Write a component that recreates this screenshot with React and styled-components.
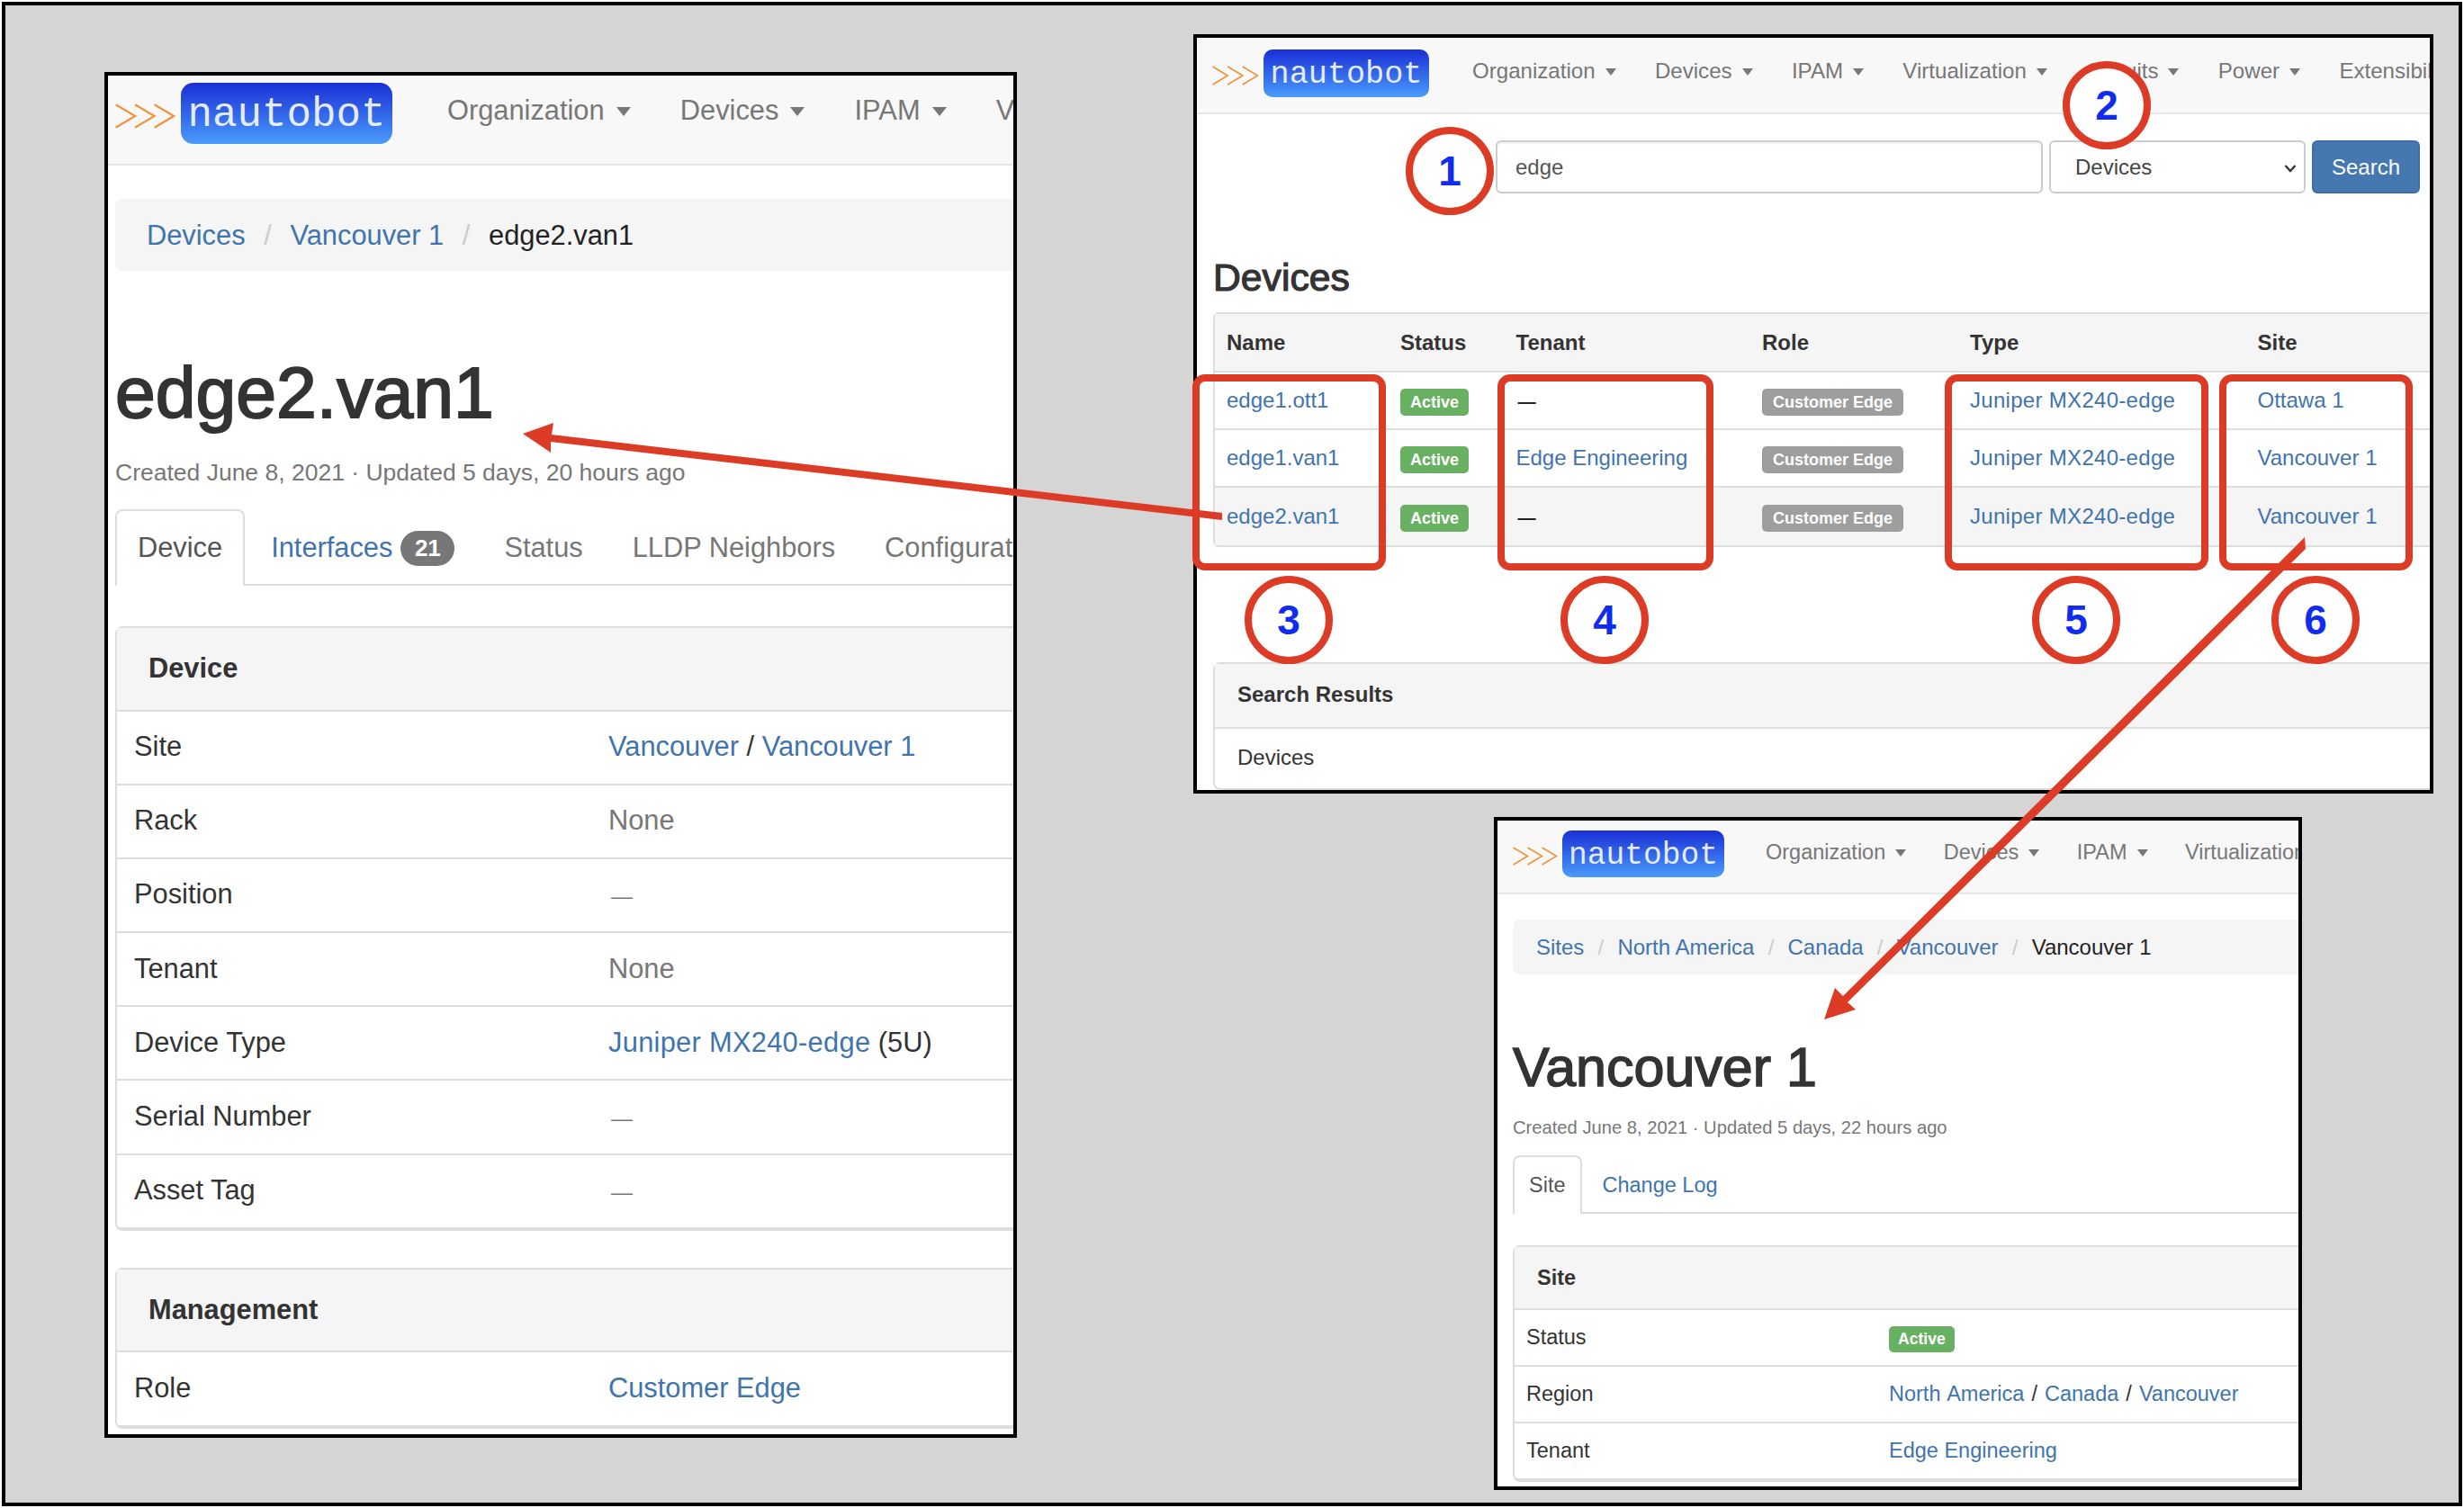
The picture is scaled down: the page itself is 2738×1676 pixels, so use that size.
import React from 'react';
import styled, { createGlobalStyle, ThemeProvider } from 'styled-components';

const t = (k) => (p) => `${p.theme[k]}px`;
const RED = '#dc3b26';
const LINK = '#3f74ae';

const Global = createGlobalStyle`
  html, body { margin: 0; padding: 0; background: #fff; }
  * { box-sizing: border-box; }
  body { font-family: "Liberation Sans", Arial, sans-serif; color: #333; }
`;

const Page = styled.div`
  position: relative;
  width: 2738px;
  height: 1676px;
  padding: 2px;
  overflow: hidden;
  background: #fff;
`;
const Frame = styled.div`
  width: 2734px;
  height: 1672px;
  border: 4px solid #000;
  background: #d5d5d5;
`;
const Win = styled.section`
  position: absolute;
  left: ${(p) => p.$x}px;
  top: ${(p) => p.$y}px;
  width: ${(p) => p.$w}px;
  height: ${(p) => p.$h}px;
  border: 4px solid #000;
  background: #fff;
  overflow: hidden;
  font-size: ${t('base')};
  line-height: 1.2;
`;
const Navbar = styled.nav`
  display: flex;
  align-items: flex-start;
  height: ${(p) => p.theme.navH + 2}px;
  background: #f8f8f8;
  border-bottom: 2px solid #e7e7e7;
  white-space: nowrap;
`;
const ChevSvg = styled.svg`
  flex: none;
  width: ${t('chevW')};
  height: ${t('chevH')};
  margin-left: ${t('chevL')};
  margin-top: ${t('chevT')};
`;
const Logo = styled.div`
  flex: none;
  display: flex;
  align-items: center;
  justify-content: center;
  width: ${t('logoW')};
  height: ${t('logoH')};
  margin-left: ${t('logoL')};
  margin-top: ${t('logoT')};
  padding-top: ${t('logoP')};
  border-radius: ${t('logoR')};
  background: linear-gradient(180deg, #1a2fd6 0%, #4a9cfb 100%);
  color: rgba(255, 255, 255, 0.88);
  font-family: "Liberation Mono", monospace;
  font-size: ${t('logoFont')};
`;
const NavList = styled.div`
  display: flex;
  align-items: center;
  height: ${t('navBox')};
  margin-left: ${t('navL')};
  gap: ${t('navGap')};
`;
const NavItem = styled.span`
  flex: none;
  display: inline-flex;
  align-items: center;
  gap: ${t('caretGap')};
  color: #777;
  font-size: ${t('navFont')};
`;
const Caret = styled.i`
  display: block;
  margin-top: 2px;
  border-top: ${t('caretH')} solid #777;
  border-left: ${(p) => p.theme.caretW / 2}px solid transparent;
  border-right: ${(p) => p.theme.caretW / 2}px solid transparent;
`;
const Crumbs = styled.div`
  display: flex;
  align-items: center;
  height: ${t('crumbH')};
  margin: ${t('crumbT')} 0 0 ${t('pageL')};
  padding: 2px 0 0 ${t('crumbP')};
  border-radius: 8px 0 0 8px;
  background: #f5f5f5;
  font-size: ${t('crumbF')};
  white-space: nowrap;
  color: #222;
`;
const Link = styled.a`
  color: ${LINK};
`;
const ModelLink = styled(Link)`
  letter-spacing: 0.3px;
`;
const Sep = styled.span`
  padding: 0 ${t('sepP')};
  color: #ccc;
`;
const Title = styled.h1`
  margin: ${t('titleT')} 0 0 ${t('pageL')};
  font-size: ${t('titleF')};
  line-height: 1;
  font-weight: 400;
  color: #333;
  -webkit-text-stroke: ${(p) => p.theme.titleS}px #333;
  white-space: nowrap;
`;
const Meta = styled.div`
  margin: ${t('metaT')} 0 0 ${t('pageL')};
  height: ${t('metaH')};
  line-height: ${t('metaH')};
  font-size: ${t('metaF')};
  color: #777;
  white-space: nowrap;
`;
const Tabs = styled.div`
  display: flex;
  gap: ${t('tabGap')};
  height: ${t('tabH')};
  margin: ${t('tabT')} 0 0 ${t('pageL')};
  border-bottom: 2px solid #ddd;
  white-space: nowrap;
`;
const Tab = styled.div`
  flex: none;
  display: flex;
  align-items: center;
  height: ${t('tabH')};
  padding: 0 ${(p) => (p.$active ? p.theme.tabActiveP : p.theme.tabP)}px;
  border: 2px solid ${(p) => (p.$active ? '#ddd' : 'transparent')};
  border-bottom: 0;
  border-radius: 8px 8px 0 0;
  background: ${(p) => (p.$active ? '#fff' : 'transparent')};
  color: ${(p) => (p.$active ? '#555' : p.$link ? LINK : '#777')};
`;
const Count = styled.span`
  margin-left: 9px;
  width: 60px;
  height: 39px;
  border-radius: 20px;
  background: #777;
  color: #fff;
  font-size: 26px;
  font-weight: 700;
  line-height: 39px;
  text-align: center;
`;
const Panel = styled.div`
  margin: ${(p) => p.$top}px 0 0 ${t('pageL')};
  border: 2px solid #ddd;
  border-right: 0;
  border-radius: 8px 0 0 8px;
`;
const PanelHead = styled.div`
  display: flex;
  align-items: center;
  height: ${t('headH')};
  padding-left: ${t('headP')};
  background: #f5f5f5;
  border-bottom: 2px solid #ddd;
  font-weight: 700;
  color: #333;
`;
const AttrRow = styled.div`
  display: grid;
  grid-template-columns: ${t('labelW')} 1fr;
  align-items: center;
  height: ${t('rowH')};
  padding-left: ${t('labelP')};
  border-bottom: 2px solid #ddd;
  white-space: nowrap;
`;
const Muted = styled.span`
  color: #777;
`;
const RegionPath = styled.span`
  word-spacing: 1.5px;
`;
const Dash = styled.span`
  display: inline-block;
  margin-left: ${t('dashL')};
  font-size: ${t('dashF')};
  font-weight: ${(p) => p.theme.dashW};
  color: ${(p) => p.theme.dashC};
`;
const Label = styled.span`
  display: inline-block;
  height: ${t('badgeH')};
  line-height: ${t('badgeH')};
  padding: 0 ${(p) => p.theme.badgeP + (p.$grey ? 1 : 0)}px;
  margin-top: 3px;
  border-radius: 5px;
  background: ${(p) => (p.$grey ? '#9e9e9e' : '#69b162')};
  color: #fff;
  font-size: ${t('badgeF')};
  font-weight: 700;
  white-space: nowrap;
`;

/* search page */
const SearchForm = styled.div`
  display: flex;
  height: 59px;
  margin: 29px 0 0 332px;
`;
const SearchInput = styled.div`
  display: flex;
  align-items: center;
  width: 608px;
  padding: 2px 0 0 20px;
  border: 2px solid #ccc;
  border-radius: 6px;
  box-shadow: inset 0 2px 2px rgba(0, 0, 0, 0.06);
  color: #555;
`;
const SearchSelect = styled(SearchInput)`
  justify-content: space-between;
  width: 285px;
  margin-left: 7px;
  padding: 2px 8px 0 27px;
  box-shadow: none;
  color: #444;
`;
const SearchButton = styled.button`
  width: 120px;
  margin-left: 7px;
  padding: 2px 0 0;
  border: 2px solid #3d6ea5;
  border-radius: 6px;
  background: #4577b0;
  color: #fff;
  font: inherit;
`;
const SectionTitle = styled.h2`
  margin: 72px 0 0 ${t('pageL')};
  font-size: 42.7px;
  line-height: 1;
  font-weight: 400;
  -webkit-text-stroke: 1.2px #333;
`;
const TablePanel = styled.div`
  margin: 17px 0 0 ${t('pageL')};
  border: 2px solid #ddd;
  border-right: 0;
  border-radius: 6px 0 0 6px;
`;
const tableCols = '193px 128.5px 273.5px 231px 319.5px 300px';
const TableHead = styled.div`
  display: grid;
  grid-template-columns: ${tableCols};
  align-items: center;
  height: 65px;
  padding: 2px 0 0 13px;
  background: #f5f5f5;
  border-bottom: 2px solid #ddd;
  font-weight: 700;
`;
const TableRow = styled.div`
  display: grid;
  grid-template-columns: ${tableCols};
  align-items: center;
  height: 64px;
  padding: 1px 0 0 13px;
  background: ${(p) => (p.$hover ? '#f5f5f5' : '#fff')};
  border-bottom: ${(p) => (p.$last ? 0 : 2)}px solid #ddd;
  white-space: nowrap;
`;
const ResultsBody = styled.div`
  display: flex;
  align-items: center;
  height: 66px;
  padding-left: 25px;
`;

/* annotations */
const Callout = styled.div`
  position: absolute;
  top: 416px;
  left: ${(p) => p.$x}px;
  width: ${(p) => p.$w}px;
  height: 218px;
  border: 8px solid ${RED};
  border-radius: 14px;
`;
const Num = styled.div`
  position: absolute;
  left: ${(p) => p.$x - 49}px;
  top: ${(p) => p.$y - 49}px;
  display: flex;
  align-items: center;
  justify-content: center;
  width: 98px;
  height: 98px;
  border: 8px solid ${RED};
  border-radius: 50%;
  background: #fff;
  color: #102cf0;
  font-size: 46px;
  font-weight: 700;
`;
const Arrows = styled.svg`
  position: absolute;
  left: 0;
  top: 0;
  width: 2738px;
  height: 1676px;
  pointer-events: none;
`;

const common = { dashC: '#777', dashL: 3, dashW: 400 };
const w1 = {
  ...common, base: 30.8, navH: 98, chevL: 8, chevT: 31, chevW: 67, chevH: 28, logoL: 6, logoT: 8, logoP: 4, logoW: 235, logoH: 68, logoR: 14, logoFont: 45.8,
  navBox: 78, navL: 61, navGap: 55.2, navFont: 30.8, caretGap: 13, caretW: 17, caretH: 10,
  pageL: 8, crumbT: 37, crumbH: 80, crumbP: 35, crumbF: 30.8, sepP: 20.7, titleT: 95, titleF: 80.5, titleS: 2,
  metaT: 28, metaH: 40, metaF: 26.5, tabT: 21.5, tabH: 85, tabGap: 3, tabP: 24, tabActiveP: 23,
  headH: 92.5, headP: 35, rowH: 82.2, labelW: 527, labelP: 19, dashF: 24, badgeH: 0, badgeP: 0, badgeF: 0,
};
const w2 = {
  ...common, base: 24, navH: 83, chevL: 17, chevT: 31, chevW: 52, chevH: 22, logoL: 5, logoT: 13, logoP: 3, logoW: 184, logoH: 53, logoR: 10, logoFont: 35.2,
  navBox: 74, navL: 48, navGap: 43.3, navFont: 24.1, caretGap: 11, caretW: 13, caretH: 8,
  pageL: 18, dashF: 20, dashC: '#222', dashL: 2, dashW: 700, badgeH: 30, badgeP: 11, badgeF: 18, headH: 72, headP: 25,
};
const w3 = {
  ...common, base: 23.5, navH: 80, chevL: 17, chevT: 29, chevW: 50, chevH: 21, logoL: 5, logoT: 11, logoP: 3, logoW: 180, logoH: 52, logoR: 10, logoFont: 34.6,
  navBox: 70, navL: 46, navGap: 41.5, navFont: 23.5, caretGap: 11, caretW: 13, caretH: 8,
  pageL: 17, crumbT: 28, crumbH: 61, crumbP: 26, crumbF: 24, sepP: 15.2, titleT: 73, titleF: 61, titleS: 1.5,
  metaT: 21, metaH: 30, metaF: 20.2, tabT: 16, tabH: 65, tabGap: 5, tabP: 16, tabActiveP: 16,
  headH: 70, headP: 25, rowH: 63, labelW: 403, labelP: 13, dashF: 20, badgeH: 29, badgeP: 10, badgeF: 17.6,
};

const Chevrons = () => (
  <ChevSvg viewBox="0 0 53 22" preserveAspectRatio="none" aria-hidden="true">
    {[0.5, 17.5, 34.5].map((x) => (
      <polyline key={x} points={`${x},1 ${x + 17},11 ${x},21`} fill="none" stroke="#f39237" strokeWidth="1.7" />
    ))}
  </ChevSvg>
);

const TopBar = ({ items }) => (
  <Navbar>
    <Chevrons />
    <Logo>nautobot</Logo>
    <NavList>
      {items.map((i) => (
        <NavItem key={i}>
          {i}
          <Caret />
        </NavItem>
      ))}
    </NavList>
  </Navbar>
);

const Crumb = ({ links, current }) => (
  <Crumbs>
    {links.map((l) => (
      <React.Fragment key={l}>
        <Link>{l}</Link>
        <Sep>/</Sep>
      </React.Fragment>
    ))}
    {current}
  </Crumbs>
);

const Rows = ({ rows }) =>
  rows.map(([k, v]) => (
    <AttrRow key={k}>
      <span>{k}</span>
      <span>{v}</span>
    </AttrRow>
  ));

const deviceRows = [
  ['Site', <><Link>Vancouver</Link> / <Link>Vancouver 1</Link></>],
  ['Rack', <Muted>None</Muted>],
  ['Position', <Dash>—</Dash>],
  ['Tenant', <Muted>None</Muted>],
  ['Device Type', <><ModelLink>Juniper MX240-edge</ModelLink> (5U)</>],
  ['Serial Number', <Dash>—</Dash>],
  ['Asset Tag', <Dash>—</Dash>],
];

const DevicePage = () => (
  <ThemeProvider theme={w1}>
    <Win $x={116} $y={80} $w={1014} $h={1518}>
      <TopBar items={['Organization', 'Devices', 'IPAM', 'Virtualization']} />
      <Crumb links={['Devices', 'Vancouver 1']} current="edge2.van1" />
      <Title>edge2.van1</Title>
      <Meta>Created June 8, 2021 · Updated 5 days, 20 hours ago</Meta>
      <Tabs>
        <Tab $active>Device</Tab>
        <Tab $link>Interfaces<Count>21</Count></Tab>
        <Tab>Status</Tab>
        <Tab>LLDP Neighbors</Tab>
        <Tab>Configuration</Tab>
      </Tabs>
      <Panel $top={45}>
        <PanelHead>Device</PanelHead>
        <Rows rows={deviceRows} />
      </Panel>
      <Panel $top={41}>
        <PanelHead>Management</PanelHead>
        <Rows rows={[['Role', <Link>Customer Edge</Link>]]} />
      </Panel>
    </Win>
  </ThemeProvider>
);

const results = [
  ['edge1.ott1', null, 'Ottawa 1'],
  ['edge1.van1', 'Edge Engineering', 'Vancouver 1'],
  ['edge2.van1', null, 'Vancouver 1'],
];

const SearchPage = () => (
  <ThemeProvider theme={w2}>
    <Win $x={1326} $y={38} $w={1378} $h={844}>
      <TopBar items={['Organization', 'Devices', 'IPAM', 'Virtualization', 'Circuits', 'Power', 'Extensibility']} />
      <SearchForm>
        <SearchInput>edge</SearchInput>
        <SearchSelect>
          Devices
          <svg width="14" height="10" viewBox="0 0 14 10" aria-hidden="true">
            <polyline points="1.5,2 7,8 12.5,2" fill="none" stroke="#333" strokeWidth="2.4" />
          </svg>
        </SearchSelect>
        <SearchButton type="button">Search</SearchButton>
      </SearchForm>
      <SectionTitle>Devices</SectionTitle>
      <TablePanel>
        <TableHead>
          <span>Name</span>
          <span>Status</span>
          <span>Tenant</span>
          <span>Role</span>
          <span>Type</span>
          <span>Site</span>
        </TableHead>
        {results.map(([name, tenant, site], i) => (
          <TableRow key={name} $hover={i === 2} $last={i === 2}>
            <Link>{name}</Link>
            <span><Label>Active</Label></span>
            {tenant ? <Link>{tenant}</Link> : <span><Dash>—</Dash></span>}
            <span><Label $grey>Customer Edge</Label></span>
            <ModelLink>Juniper MX240-edge</ModelLink>
            <Link>{site}</Link>
          </TableRow>
        ))}
      </TablePanel>
      <Panel $top={128}>
        <PanelHead>Search Results</PanelHead>
        <ResultsBody>Devices</ResultsBody>
      </Panel>
    </Win>
  </ThemeProvider>
);

const SitePage = () => (
  <ThemeProvider theme={w3}>
    <Win $x={1660} $y={908} $w={898} $h={748}>
      <TopBar items={['Organization', 'Devices', 'IPAM', 'Virtualization']} />
      <Crumb links={['Sites', 'North America', 'Canada', 'Vancouver']} current="Vancouver 1" />
      <Title>Vancouver 1</Title>
      <Meta>Created June 8, 2021 · Updated 5 days, 22 hours ago</Meta>
      <Tabs>
        <Tab $active>Site</Tab>
        <Tab $link>Change Log</Tab>
      </Tabs>
      <Panel $top={35}>
        <PanelHead>Site</PanelHead>
        <Rows
          rows={[
            ['Status', <Label>Active</Label>],
            ['Region', <RegionPath><Link>North America</Link> / <Link>Canada</Link> / <Link>Vancouver</Link></RegionPath>],
            ['Tenant', <Link>Edge Engineering</Link>],
          ]}
        />
      </Panel>
    </Win>
  </ThemeProvider>
);

export default function App() {
  return (
    <>
      <Global />
      <Page>
        <Frame />
        <DevicePage />
        <SearchPage />
        <SitePage />
        <Callout $x={1325} $w={215} />
        <Callout $x={1664} $w={240} />
        <Callout $x={2161} $w={293} />
        <Callout $x={2466} $w={215} />
        <Num $x={1611} $y={190}>1</Num>
        <Num $x={2341} $y={117}>2</Num>
        <Num $x={1432} $y={689}>3</Num>
        <Num $x={1783} $y={689}>4</Num>
        <Num $x={2307} $y={689}>5</Num>
        <Num $x={2573} $y={689}>6</Num>
        <Arrows viewBox="0 0 2738 1676" aria-hidden="true">
          <polygon fill={RED} points="581,482 615,470 613,483 1358,570 1358,578 612,491 612,503" />
          <polygon fill={RED} points="2027,1133 2039,1098 2048,1107 2555,603 2561,597 2562,610 2053,1114 2062,1122" />
        </Arrows>
      </Page>
    </>
  );
}
